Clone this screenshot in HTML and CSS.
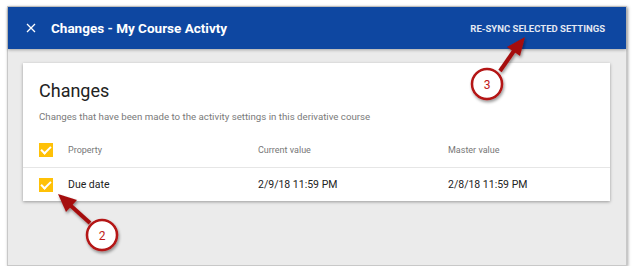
FILE: index.html
```html
<!DOCTYPE html>
<html lang="en">
<head>
    <meta charset="UTF-8">
    <title>Changes - My Course Activty</title>
    <link rel="stylesheet" href="styles.css">
</head>
<body>
    <div class="frame">
        <header class="topbar">
            <svg class="close" width="10" height="10" viewBox="0 0 10 10">
                <path d="M1 1L9 9M9 1L1 9" stroke="#fff" stroke-width="1.3"/>
            </svg>
            <span class="title">Changes - My Course Activty</span>
            <span class="resync">RE-SYNC SELECTED SETTINGS</span>
        </header>
        <main class="content">
            <section class="card">
                <h2>Changes</h2>
                <p class="sub">Changes that have been made to the activity settings in this derivative course</p>
                <div class="row head">
                    <span class="check"></span>
                    <span class="col">Property</span>
                    <span class="col">Current value</span>
                    <span class="col last">Master value</span>
                </div>
                <div class="row">
                    <span class="check"></span>
                    <span class="col">Due date</span>
                    <span class="col">2/9/18 11:59 PM</span>
                    <span class="col last">2/8/18 11:59 PM</span>
                </div>
            </section>
        </main>
    </div>

    <!-- callouts -->
    <svg class="marks" width="634" height="276" viewBox="0 0 634 276">
        <defs>
            <filter id="sh" x="-20%" y="-20%" width="140%" height="140%">
                <feDropShadow dx="1" dy="2" stdDeviation="1.5" flood-opacity="0.4"/>
            </filter>
        </defs>
        <g filter="url(#sh)">
            <line x1="500" y1="71" x2="516" y2="48" stroke="#a50f0f" stroke-width="4"/>
            <polygon points="525,37 507,47 520,56" fill="#a50f0f"/>
            <circle cx="487" cy="84" r="15" fill="#fff" stroke="#b41414" stroke-width="2.5"/>
            <line x1="90" y1="223" x2="70" y2="205" stroke="#a50f0f" stroke-width="4"/>
            <polygon points="58,194 77,200 66,212" fill="#a50f0f"/>
            <circle cx="102" cy="235" r="15" fill="#fff" stroke="#b41414" stroke-width="2.5"/>
        </g>
        <text x="487" y="88.5" class="num">3</text>
        <text x="102" y="239.5" class="num">2</text>
    </svg>
</body>
</html>
```

FILE: styles.css
```css
body {
    margin: 0;
    background: #fff;
    font-family: Roboto, "Liberation Sans", sans-serif;
    position: relative;
}
.frame {
    margin: 6px 0 0 7px;
    width: 620px;
    height: 260px;
    border: 1px solid #c8c8c8;
    box-shadow: 1px 1px 3px rgba(0, 0, 0, 0.35);
    background: #ebebeb;
    display: flex;
    flex-direction: column;
    box-sizing: border-box;
}
.topbar {
    height: 42px;
    background: #0e47a1;
    color: #fff;
    display: flex;
    align-items: center;
    padding: 0 21px 0 18px;
    box-shadow: 0 1px 3px rgba(0, 0, 0, 0.3);
}
.close {
    margin-right: 15px;
}
.title {
    font-weight: bold;
    font-size: 13.5px;
    flex: 1;
}
.resync {
    font-weight: bold;
    font-size: 9.5px;
    color: #e3e8f2;
}
.content {
    padding: 14px 16px 0 15px;
}
.card {
    background: #fff;
    box-shadow: 0 1px 3px rgba(0, 0, 0, 0.35);
    padding: 16px 0 0;
}
.card h2 {
    margin: 0 0 0 16px;
    font-weight: normal;
    font-size: 18px;
    color: #222;
    line-height: 24px;
}
.sub {
    margin: 8px 0 0 16px;
    font-size: 9.7px;
    color: #7a7a7a;
}
.row {
    display: flex;
    align-items: center;
    height: 33px;
    padding-left: 16px;
    font-size: 10.5px;
    color: #222;
}
.row.head {
    margin-top: 11px;
    height: 34px;
    font-size: 9px;
    color: #777;
    border-bottom: 1px solid #e6e6e6;
}
.check {
    flex-shrink: 0;
    width: 14px;
    height: 14px;
    background: #ffc107;
    margin-right: 15px;
    position: relative;
}
.check::after {
    content: "";
    position: absolute;
    left: 4px;
    top: 1px;
    width: 4px;
    height: 8px;
    border: solid #fff;
    border-width: 0 2px 2px 0;
    transform: rotate(45deg);
}
.col {
    width: 190px;
    flex-shrink: 0;
}
.col.last {
    flex: 1;
}
.marks {
    position: absolute;
    left: 0;
    top: 0;
}
.num {
    font-family: Roboto, "Liberation Sans", sans-serif;
    font-size: 12px;
    fill: #c01818;
    text-anchor: middle;
}
```
